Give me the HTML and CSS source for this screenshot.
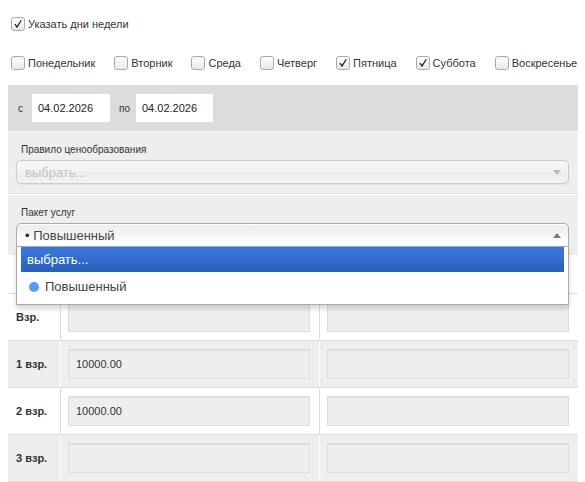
FILE: index.html
```html
<!DOCTYPE html>
<html lang="ru">
<head>
<meta charset="utf-8">
<title>Форма</title>
<link rel="stylesheet" href="styles.css">
</head>
<body>
<div class="page">
  <div class="top-check">
    <label class="chk"><span class="box on"><svg viewBox="0 0 14 14"><path d="M3.5 7.2 L5.8 10.6 L10.8 2.6"/></svg></span><span class="chk-text">Указать дни недели</span></label>
  </div>
  <div class="days">
    <label class="chk"><span class="box"></span><span class="chk-text">Понедельник</span></label>
    <label class="chk"><span class="box"></span><span class="chk-text">Вторник</span></label>
    <label class="chk"><span class="box"></span><span class="chk-text">Среда</span></label>
    <label class="chk"><span class="box"></span><span class="chk-text">Четверг</span></label>
    <label class="chk"><span class="box on"><svg viewBox="0 0 14 14"><path d="M3.5 7.2 L5.8 10.6 L10.8 2.6"/></svg></span><span class="chk-text">Пятница</span></label>
    <label class="chk"><span class="box on"><svg viewBox="0 0 14 14"><path d="M3.5 7.2 L5.8 10.6 L10.8 2.6"/></svg></span><span class="chk-text">Суббота</span></label>
    <label class="chk"><span class="box"></span><span class="chk-text">Воскресенье</span></label>
  </div>
  <div class="dates">
    <span class="date-lbl">с</span>
    <div class="date-input">04.02.2026</div>
    <span class="date-lbl date-lbl-po">по</span>
    <div class="date-input date-input-2">04.02.2026</div>
  </div>
  <div class="panel">
    <div class="section section-first">
      <div class="field-lbl">Правило ценообразования</div>
      <div class="select disabled">
        <span class="placeholder">выбрать...</span>
        <span class="arrow down"></span>
      </div>
    </div>
    <div class="section section-second">
      <div class="field-lbl">Пакет услуг</div>
      <div class="select-wrap">
        <div class="select open">
          <span class="value"><span class="bullet">•</span> Повышенный</span>
          <span class="arrow up"></span>
        </div>
        <div class="drop">
          <ul class="results">
            <li class="result highlighted">выбрать...</li>
            <li class="result result-dot"><span class="dot"></span>Повышенный</li>
          </ul>
        </div>
      </div>
    </div>
  </div>
  <div class="grid">
    <div class="row head">
      <div class="cell lbl"></div>
      <div class="cell"><div class="inp white"></div></div>
      <div class="cell"><div class="inp white"></div></div>
    </div>
    <div class="row">
      <div class="cell lbl">Взр.</div>
      <div class="cell"><div class="inp"></div></div>
      <div class="cell"><div class="inp"></div></div>
    </div>
    <div class="row gray">
      <div class="cell lbl">1 взр.</div>
      <div class="cell"><div class="inp">10000.00</div></div>
      <div class="cell"><div class="inp"></div></div>
    </div>
    <div class="row">
      <div class="cell lbl">2 взр.</div>
      <div class="cell"><div class="inp">10000.00</div></div>
      <div class="cell"><div class="inp"></div></div>
    </div>
    <div class="row gray">
      <div class="cell lbl">3 взр.</div>
      <div class="cell"><div class="inp"></div></div>
      <div class="cell"><div class="inp"></div></div>
    </div>
  </div>
</div>
</body>
</html>
```

FILE: styles.css
```css
html, body {
  margin: 0;
  padding: 0;
  background: #fff;
}
body {
  font-family: "Liberation Sans", Arial, sans-serif;
  font-size: 11px;
  color: #333;
}
.page {
  width: 570px;
  margin: 8px 0 0 8px;
}
.top-check {
  height: 32px;
  display: flex;
  align-items: center;
  padding-left: 3px;
}
.days {
  height: 45px;
  display: flex;
  align-items: center;
  padding-left: 3px;
  gap: 19px;
}
.chk {
  display: flex;
  align-items: center;
}
.box {
  width: 12px;
  height: 12px;
  border: 1px solid #a9a9a9;
  border-radius: 3px;
  background: linear-gradient(#fdfdfd, #e9e9e9);
  margin-right: 3px;
  display: flex;
}
.box svg {
  width: 12px;
  height: 12px;
}
.box path {
  fill: none;
  stroke: #222;
  stroke-width: 1.5;
}
.chk-text {
  font-size: 11px;
  color: #333;
}
.dates {
  height: 46px;
  background: #dcdcdc;
  display: flex;
  align-items: center;
  padding-left: 10px;
}
.date-lbl {
  font-size: 10px;
  color: #333;
  width: 14px;
}
.date-lbl-po {
  margin-left: 9px;
  width: 17px;
}
.date-input {
  width: 72px;
  height: 28px;
  background: #fff;
  line-height: 28px;
  padding-left: 6px;
  font-size: 11px;
  color: #222;
}
.date-input-2 {
  width: 71px;
}
.panel {
  background: #eee;
  border-top: 1px solid #f6f6f6;
}
.section {
  padding: 0 9px 0 8px;
}
.section-first {
  padding-top: 12px;
  padding-bottom: 9px;
  border-bottom: 1px solid #ddd;
}
.section-second {
  border-top: 1px solid #fff;
  padding-top: 12px;
  padding-bottom: 8px;
}
.field-lbl {
  font-size: 10px;
  line-height: 12px;
  margin-left: 5px;
  margin-bottom: 4px;
  color: #333;
}
.select-wrap {
  position: relative;
}
.select {
  height: 22px;
  border: 1px solid #aaa;
  border-radius: 5px;
  background: linear-gradient(#fff 20%, #f6f6f6 50%, #eee 52%, #f4f4f4 100%);
  box-shadow: 0 0 3px #fff inset, 0 1px 1px rgba(0,0,0,0.1);
  display: flex;
  align-items: center;
  padding-left: 8px;
  padding-right: 7px;
  font-size: 13px;
  color: #444;
}
.select.disabled {
  opacity: 0.5;
}
.placeholder {
  color: #999;
  flex: 1;
}
.value {
  flex: 1;
}
.bullet {
  font-size: 13px;
  color: #222;
}
.select.open {
  border-radius: 5px 5px 0 0;
  background: linear-gradient(#eee 20%, #fff 80%);
  box-shadow: 0 1px 0 #fff inset;
}
.arrow {
  width: 0;
  height: 0;
  border-left: 4px solid transparent;
  border-right: 4px solid transparent;
}
.arrow.down {
  border-top: 5px solid #888;
}
.arrow.up {
  border-bottom: 5px solid #777;
}
.drop {
  position: absolute;
  left: 0;
  right: 0;
  top: 24px;
  background: #fff;
  border: 1px solid #aaa;
  border-top: 0;
  box-shadow: 0 4px 5px rgba(0,0,0,0.15);
  z-index: 10;
}
.results {
  list-style: none;
  margin: 0 4px 4px 0;
  padding: 0 0 0 4px;
}
.result {
  padding: 5px 6px;
  line-height: 15px;
  font-size: 13px;
  color: #444;
  display: flex;
  align-items: center;
}
.result.highlighted {
  background: linear-gradient(#3875d7 20%, #2a62bc 90%);
  color: #fff;
}
.result-dot {
  padding-top: 7px;
  padding-bottom: 6px;
}
.dot {
  width: 10px;
  height: 10px;
  border-radius: 50%;
  background: #5b9bf8;
  margin: 0 6px 0 2px;
}
.grid {
  display: flex;
  flex-direction: column;
}
.row {
  display: grid;
  grid-template-columns: 52px 259px 259px;
  border-bottom: 1px solid #ddd;
  background: #fff;
}
.row.gray {
  background: #eee;
}
.row.head {
  height: 38px;
}
.cell {
  border-left: 1px solid #ddd;
  padding: 8px 9px 8px 7px;
}
.row.gray .cell {
  border-left-color: #fff;
}
.cell.lbl {
  border-left: 0;
  padding: 0 0 0 8px;
  display: flex;
  align-items: center;
  font-weight: bold;
  font-size: 11px;
  color: #333;
}
.row.head .cell {
  padding-top: 2px;
  padding-bottom: 0;
}
.inp {
  height: 27px;
  border: 1px solid #ddd;
  border-top-width: 2px;
  background: #eee;
  line-height: 26px;
  padding-left: 7px;
  font-size: 11px;
  color: #333;
}
.inp.white {
  background: #fff;
  height: 24px;
}
```
